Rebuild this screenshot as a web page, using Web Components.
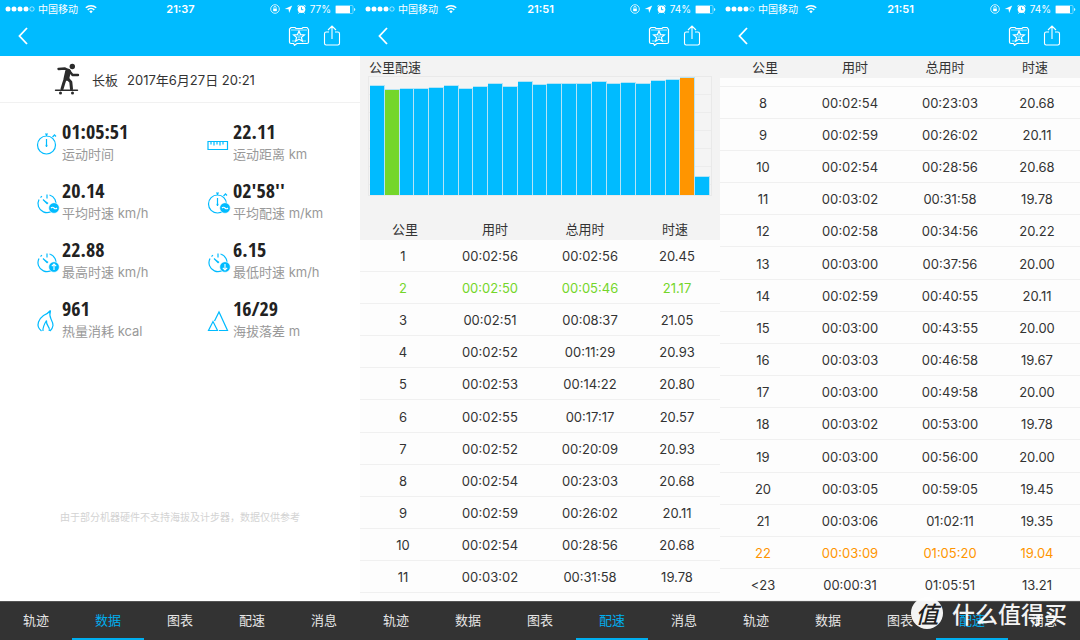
<!DOCTYPE html>
<html lang="zh-CN">
<head>
<meta charset="utf-8">
<title>运动数据</title>
<style>
  body {
    margin: 0;
    font-family: Inter, "Noto Sans CJK SC", sans-serif;
    font-size: 13px;
    color: #333;
    background: #fff;
  }
  main {
    display: grid;
    grid-template-columns: repeat(3, 1fr);
    min-height: 100vh;
    position: relative;
  }
</style>
</head>
<body>
<main>
  <phone-screen time="21:37" battery="77" active="数据">
    <activity-title name="长板" date="2017年6月27日 20:21"></activity-title>
    <stat-grid>
      <stat-item icon="time" value="01:05:51">运动时间</stat-item>
      <stat-item icon="ruler" value="22.11">运动距离 km</stat-item>
      <stat-item icon="speed-avg" value="20.14">平均时速 km/h</stat-item>
      <stat-item icon="pace-avg" value="02'58''">平均配速 m/km</stat-item>
      <stat-item icon="speed-max" value="22.88">最高时速 km/h</stat-item>
      <stat-item icon="speed-min" value="6.15">最低时速 km/h</stat-item>
      <stat-item icon="flame" value="961">热量消耗 kcal</stat-item>
      <stat-item icon="peaks" value="16/29">海拔落差 m</stat-item>
    </stat-grid>
    <foot-note>由于部分机器硬件不支持海拔及计步器，数据仅供参考</foot-note>
  </phone-screen>
  <phone-screen time="21:51" battery="74" active="配速">
    <pace-chart heading="公里配速"></pace-chart>
    <split-table from="1" to="11"></split-table>
  </phone-screen>
  <phone-screen time="21:51" battery="74" active="配速">
    <split-table from="8" to="23" scrolled></split-table>
  </phone-screen>
  <site-mark glyph="值">什么值得买</site-mark>
</main>

<script>
const define = (name, render) => customElements.define(name, class extends HTMLElement {
  constructor() { super(); this.attachShadow({ mode: "open" }); }
  connectedCallback() { this.shadowRoot.innerHTML = render(this); }
});

define("status-bar", el => `
<style>
  :host { display: grid; grid-template-columns: 1fr auto 1fr; align-items: center; height: 18px; padding: 0 4px 0 5px; color: #fff; font-size: 10px; line-height: 18px; }
  div { display: flex; align-items: center; }
  .right { justify-content: flex-end; gap: 4px; }
  .carrier { margin: 0 7px 0 3px; }
  time { font-weight: 600; font-size: 11px; }
  svg { display: block; }
</style>
<div>
  <svg width="30" height="6" fill="#fff"><circle cx="3" cy="3" r="2.5"/><circle cx="9" cy="3" r="2.5"/><circle cx="15" cy="3" r="2.5"/><circle cx="21" cy="3" r="2.5"/><circle cx="27" cy="3" r="2.2" fill="none" stroke="#fff" stroke-width=".6"/></svg>
  <span class="carrier">中国移动</span>
  <svg width="12" height="10" viewBox="0 0 12 10" fill="none" stroke="#fff" stroke-width="1.5"><path d="M.8 3.8a7.4 7.4 0 0 1 10.4 0M2.7 5.9a4.7 4.7 0 0 1 6.6 0"/><path d="M6 9.2 4.3 7.4a2.5 2.5 0 0 1 3.4 0z" fill="#fff" stroke="none"/></svg>
</div>
<time>${el.getAttribute("time")}</time>
<div class="right">
  <svg width="10" height="10" viewBox="0 0 10 10" fill="none" stroke="#fff" stroke-width=".8"><circle cx="5" cy="5" r="4.3"/><path d="M3.9 4.6V3.5a1.1 1.1 0 0 1 2.2 0v1.1"/><rect x="3.2" y="4.6" width="3.6" height="2.6" fill="#fff" stroke="none"/></svg>
  <svg width="9" height="10" viewBox="0 0 9 10" fill="#fff"><path d="M8.2 1.5 5.1 9 4.6 5.2.8 4.9z"/></svg>
  <svg width="9" height="10" viewBox="0 0 9 10"><circle cx="4.5" cy="5.3" r="3.8" fill="#fff"/><path d="M4.500 3.200v2.500h1.800" fill="none" stroke="#00bbff" stroke-width=".9"/><path d="M.3 3A2 2 0 0 1 2.8.8zM8.7 3A2 2 0 0 0 6.2.8z" fill="#fff"/><path d="M1.500 9.500l1-1.300M7.500 9.500 6.500 8.200" stroke="#fff"/></svg>
  <span>${el.getAttribute("battery")}%</span>
  <svg width="21" height="9" viewBox="0 0 21 9"><rect x=".5" y=".5" width="17.5" height="8" rx="1" fill="none" stroke="#fff" stroke-opacity=".6" stroke-width=".7"/><rect x="1" y="1" width="14" height="7" fill="#fff"/><path d="M19 3v3q1.3-.3 1.3-1.5T19 3z" fill="#fff" fill-opacity=".8"/></svg>
</div>`);

define("nav-bar", () => `
<style>
  :host { display: flex; align-items: center; height: 36px; padding: 0 19px 2px 18px; }
  button { display: block; border: 0; padding: 0; background: none; cursor: pointer; }
  .back { margin-right: auto; }
  .share { margin-left: 13px; }
  svg { display: block; fill: none; stroke: #fff; }
</style>
<button class="back" aria-label="返回"><svg width="10" height="18" stroke-width="1.8"><path d="M9 1 1.5 9 9 17"/></svg></button>
<button aria-label="收藏"><svg width="22" height="20" viewBox="0 0 22 20" stroke-width="1.200"><path d="M3 1.5h4l1 1h6l1-1h4L20.500 3.500V16q0 1.500-1.500 1.500H9L6.500 19.300 5.500 17.500H3Q1.500 17.500 1.500 16V3z"/><path d="M3 4h16M4 15h3M15 15h3" stroke-opacity=".7"/><path d="m11 5 1.500 3.600 3.900.3-3 2.500 1 3.800L11 13.100l-3.400 2.100 1-3.800-3-2.500 3.900-.3z"/><circle cx="11" cy="10.500" r="1" stroke-opacity=".5"/></svg></button>
<button class="share" aria-label="分享"><svg width="18" height="22" viewBox="0 0 18 22" stroke-width="1.100"><path d="M6 7H3.200Q1.500 7 1.500 8.700v9.600Q1.500 20 3.200 20h11.600q1.700 0 1.700-1.700V8.700Q16.500 7 14.800 7H12M9 14V1.500M5 5l4-4 4 4"/></svg></button>`);

define("tab-bar", el => `
<style>
  :host { display: block; background: #333; border-top: 1px solid #555; }
  nav { display: grid; grid-template-columns: repeat(5, 1fr); }
  a { display: block; height: 36px; line-height: 36px; border-bottom: 2px solid transparent; text-align: center; color: #e6e6e6; text-decoration: none; }
  a[aria-current] { color: #00aeef; border-color: #00aeef; }
</style>
<nav>${["轨迹", "数据", "图表", "配速", "消息"].map(t => `<a href="#${t}"${t === el.getAttribute("active") ? ' aria-current="page"' : ""}>${t}</a>`).join("")}</nav>`);

define("phone-screen", el => `
<style>
  :host { display: flex; flex-direction: column; min-width: 0; }
  header { background: #00bbff; }
  section { flex: 1; display: flex; flex-direction: column; background: #fdfdfd; }
</style>
<header><status-bar time="${el.getAttribute("time")}" battery="${el.getAttribute("battery")}"></status-bar><nav-bar></nav-bar></header>
<section><slot></slot></section>
<tab-bar active="${el.getAttribute("active")}"></tab-bar>`);

define("activity-title", el => `
<style>
  :host { display: flex; align-items: center; height: 46px; padding-left: 54px; border-bottom: 1px solid #f1f1f1; background: #fff; }
  svg { margin-right: 12px; }
  b { font-weight: 400; margin-right: 9px; }
</style>
<svg width="26" height="32" viewBox="0 0 26 32" fill="none" stroke="#2b2b2b" stroke-linecap="round" stroke-linejoin="round"><circle cx="18.300" cy="3.500" r="2.700" fill="#2b2b2b" stroke="none"/><path d="M4.500 6 11 5.500 15 7.500 18.500 12H24" stroke-width="2.400"/><path d="M14 8.500 12.500 15" stroke-width="5.600"/><path d="M11.500 15 9.800 20 8 26M13.500 15.500 16.800 19 17.500 26" stroke-width="3"/><path d="M1.500 27.300h22" stroke-width="1.400"/><circle cx="6.500" cy="30" r="1.500" fill="#2b2b2b" stroke="none"/><circle cx="18.500" cy="30" r="1.500" fill="#2b2b2b" stroke="none"/></svg>
<b>${el.getAttribute("name")}</b><span>${el.getAttribute("date")}</span>`);

define("stat-grid", () => `
<style>
  :host { display: grid; grid-template-columns: 1fr 1fr; column-gap: 18px; row-gap: 9px; padding: 17px 0 0 36px; background: #fff; }
</style>
<slot></slot>`);

const dial = `<path d="M11 3.500v4M13.500 4a9 9 0 1 1-10.500 4.500M4.500 6.500A9 9 0 0 1 6 5.200M7 8.500l4.500 4.500"/><path d="M8 9l4.500 3-1 1z" fill="#00bbff" stroke="none"/>`;
const watch = `<circle cx="10.500" cy="13" r="9"/><path d="M10.500 4V2M9 2h3M16.500 5l1.500-1.500M10.500 7v8M18 2.500l2 2"/><circle cx="10.500" cy="13.500" r="1" fill="#00bbff" stroke="none"/>`;
const badge = mark => `<circle cx="18" cy="17" r="5.300" fill="#00bbff" stroke="#fff" stroke-width=".6"/><path d="${mark}" stroke="#fff" stroke-width="1.100"/>`;
const icons = {
  "time": watch,
  "ruler": `<path d="M1 9.500h19.500v8H1zM4 9.500v3M7 9.500v4M10 9.500v3M13 9.500v4M16 9.500v3" stroke-width="1.200"/>`,
  "speed-avg": dial + badge("M15 17q1.500-1.500 3 0t3 0"),
  "pace-avg": watch + badge("M15 17q1.500-1.500 3 0t3 0"),
  "speed-max": dial + badge("M18 20v-6M15.800 16.200 18 14l2.200 2.200"),
  "speed-min": dial + badge("M18 14v6M15.800 17.800 18 20l2.200-2.200"),
  "flame": `<path d="M5.500 22Q.8 18.500 2.500 13 4 9 7.500 6.500 12 4.500 14.500 1.500 13 6 15 10t2 6.500Q16.500 20 14 22M7 22Q6.500 18 10.500 11.500 10.300 15 12 17t1.200 5"/>`,
  "peaks": `<path d="M1.500 21.500h9L6 12.500zM7.500 12 12 3l8.500 18.500H12"/>`
};
define("stat-item", el => `
<style>
  :host { display: flex; height: 50px; white-space: nowrap; }
  svg { flex: none; margin: 12px 2px 0 0; }
  strong { display: block; height: 24px; font: 700 20px/24px "Noto Sans ExtraCondensed", "Open Sans Condensed", "Liberation Sans Narrow", "Roboto Condensed", "Liberation Sans", sans-serif; color: #222; }
  span { display: block; line-height: 20px; color: #999; }
</style>
<svg width="24" height="24" viewBox="0 0 24 24" fill="none" stroke="#00bbff" stroke-width="1.200">${icons[el.getAttribute("icon")]}</svg>
<div><strong>${el.getAttribute("value")}</strong><span><slot></slot></span></div>`);

define("foot-note", () => `
<style>
  :host { display: block; flex: 1; padding-top: 160px; background: #fff; text-align: center; font-size: 10px; line-height: 20px; color: #d3d3d3; }
</style>
<slot></slot>`);

const bars = [110, 106, 107, 107, 108, 110, 107, 109, 112, 109, 114, 111, 112, 112, 112, 114, 112, 113, 112, 115, 116, 118, 19];
define("pace-chart", el => `
<style>
  :host { display: block; padding: 2px 8px 22px; background: #f3f3f3; }
  h2 { margin: 0; padding-left: 1px; font-size: 13px; font-weight: 400; line-height: 18px; }
  .plot { display: flex; align-items: flex-end; height: 118px; border: 1px solid #e9e9e9; padding: 0 1px;
    background: repeating-linear-gradient(#f4f4f4 0 17px, #ececec 17px 18px); }
  i { flex: 1; background: #00bbff; border: solid #b4e4f6; border-width: 1px 1px 0 0; box-sizing: border-box; }
  .best { background: #74d62a; }
  .worst { background: #ff9500; }
</style>
<h2>${el.getAttribute("heading")}</h2>
<div class="plot">${bars.map((h, n) => `<i style="height:${h}px"${n === 1 ? ' class="best"' : n === 21 ? ' class="worst"' : ""}></i>`).join("")}</div>`);

const splits = [
  ["1", "00:02:56", "00:02:56", "20.45"], ["2", "00:02:50", "00:05:46", "21.17"],
  ["3", "00:02:51", "00:08:37", "21.05"], ["4", "00:02:52", "00:11:29", "20.93"],
  ["5", "00:02:53", "00:14:22", "20.80"], ["6", "00:02:55", "00:17:17", "20.57"],
  ["7", "00:02:52", "00:20:09", "20.93"], ["8", "00:02:54", "00:23:03", "20.68"],
  ["9", "00:02:59", "00:26:02", "20.11"], ["10", "00:02:54", "00:28:56", "20.68"],
  ["11", "00:03:02", "00:31:58", "19.78"], ["12", "00:02:58", "00:34:56", "20.22"],
  ["13", "00:03:00", "00:37:56", "20.00"], ["14", "00:02:59", "00:40:55", "20.11"],
  ["15", "00:03:00", "00:43:55", "20.00"], ["16", "00:03:03", "00:46:58", "19.67"],
  ["17", "00:03:00", "00:49:58", "20.00"], ["18", "00:03:02", "00:53:00", "19.78"],
  ["19", "00:03:00", "00:56:00", "20.00"], ["20", "00:03:05", "00:59:05", "19.45"],
  ["21", "00:03:06", "01:02:11", "19.35"], ["22", "00:03:09", "01:05:20", "19.04"],
  ["&lt;23", "00:00:31", "01:05:51", "13.21"]
];
define("split-table", el => `
<style>
  :host { display: block; }
  table { width: 100%; table-layout: fixed; border-collapse: separate; border-spacing: 0; text-align: center; }
  th, td { padding: 0; font-weight: 400; }
  th { height: 22px; line-height: 22px; background: #f3f3f3; }
  td { height: 29px; padding-top: 2px; line-height: 29px; border-bottom: 1px solid #f0f0f0; }
  tr:nth-child(6n) td { height: 30px; }
  td:nth-child(1) { padding-right: 4px; }
  td:nth-child(2) { padding-right: 10px; }
  td:nth-child(3) { padding-left: 10px; }
  td:nth-child(4) { padding-left: 4px; }
  .best { color: #74d62a; }
  .worst { color: #ff9500; }
  :host([scrolled]) thead::after { content: ""; display: table-row; height: 8px; }
  :host([scrolled]) tbody tr:first-child td { border-top: 1px solid #f0f0f0; }
</style>
<table>
  <thead><tr><th>公里</th><th>用时</th><th>总用时</th><th>时速</th></tr></thead>
  <tbody>${splits.slice(el.getAttribute("from") - 1, +el.getAttribute("to")).map(r =>
    `<tr class="${r[0] === "2" ? "best" : r[0] === "22" ? "worst" : ""}">${r.map(c => `<td>${c}</td>`).join("")}</tr>`).join("")}</tbody>
</table>`);

define("site-mark", el => `
<style>
  :host { position: absolute; right: 13px; bottom: 10px; display: flex; align-items: center; gap: 9px; color: #fff; font: 500 23px/34px "Noto Sans CJK SC", sans-serif; opacity: .95; }
  b { width: 32px; height: 32px; border-radius: 50%; background: #fff; color: #222; font-weight: 500; font-style: italic; line-height: 32px; text-align: center; }
</style>
<b>${el.getAttribute("glyph")}</b><slot></slot>`);
</script>
</body>
</html>
